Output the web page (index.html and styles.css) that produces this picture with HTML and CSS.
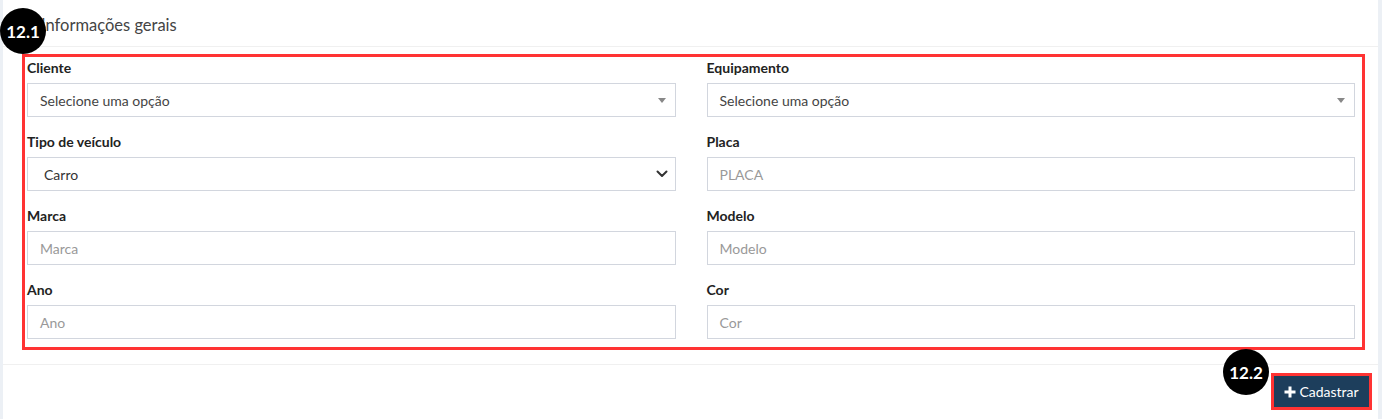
FILE: index.html
```html
<!DOCTYPE html>
<html lang="pt-BR">
<head>
<meta charset="utf-8">
<title>Informações gerais</title>
<link rel="stylesheet" href="styles.css">
</head>
<body>
<div class="card">
  <div class="card-header">
    <h3 class="card-title">Informações gerais</h3>
  </div>
  <div class="card-body">
    <div class="highlight">
      <div class="form-grid">
        <div class="group">
          <label class="lbl">Cliente</label>
          <div class="select2">
            <span class="sel-text">Selecione uma opção</span>
            <span class="tri"></span>
          </div>
        </div>
        <div class="group">
          <label class="lbl">Equipamento</label>
          <div class="select2">
            <span class="sel-text">Selecione uma opção</span>
            <span class="tri"></span>
          </div>
        </div>
        <div class="group">
          <label class="lbl">Tipo de veículo</label>
          <div class="native-select">
            <span class="native-text">Carro</span>
            <svg class="chev" width="12" height="8" viewBox="0 0 12 8"><path d="M1.5 1.5 L6 6 L10.5 1.5" fill="none" stroke="#333" stroke-width="2" stroke-linecap="round" stroke-linejoin="round"/></svg>
          </div>
        </div>
        <div class="group">
          <label class="lbl">Placa</label>
          <div class="input"><span class="ph">PLACA</span></div>
        </div>
        <div class="group">
          <label class="lbl">Marca</label>
          <div class="input"><span class="ph">Marca</span></div>
        </div>
        <div class="group">
          <label class="lbl">Modelo</label>
          <div class="input"><span class="ph">Modelo</span></div>
        </div>
        <div class="group">
          <label class="lbl">Ano</label>
          <div class="input"><span class="ph">Ano</span></div>
        </div>
        <div class="group">
          <label class="lbl">Cor</label>
          <div class="input"><span class="ph">Cor</span></div>
        </div>
      </div>
    </div>
  </div>
  <div class="card-footer">
    <div class="btn-outline">
      <button class="btn"><svg class="plus" width="12" height="12" viewBox="0 0 12 12"><path d="M6 0.5 V11.5 M0.5 6 H11.5" stroke="#fff" stroke-width="3"/></svg>Cadastrar</button>
    </div>
  </div>
  <div class="badge badge-1">12.1</div>
  <div class="badge badge-2">12.2</div>
</div>
</body>
</html>
```

FILE: styles.css
```css
html, body {
  margin: 0;
  padding: 0;
  height: 100%;
}
body {
  background: #ecf0f5;
  font-family: Lato, "Liberation Sans", sans-serif;
  color: #212529;
  overflow: hidden;
}
.card {
  position: relative;
  background: #fff;
  margin: 0 4px 0 3px;
  height: 100%;
  box-sizing: border-box;
}
.card-header {
  height: 47px;
  border-bottom: 1px solid #f0f0f0;
  box-sizing: border-box;
  padding: 15px 0 0 38px;
}
.card-title {
  margin: 0;
  font-size: 16.5px;
  font-weight: 400;
  line-height: 20px;
  color: #444;
}
.card-body {
  padding: 7px 13px 0 19px;
}
.highlight {
  border: 3px solid #ff3333;
  padding: 2px 7px 8px 2px;
}
.form-grid {
  display: grid;
  grid-template-columns: 1fr 1fr;
  column-gap: 31px;
  row-gap: 16px;
}
.lbl {
  display: block;
  font-size: 14px;
  font-weight: 700;
  line-height: 18px;
  height: 18px;
  margin-bottom: 6px;
  color: #222;
}
.select2, .native-select, .input {
  height: 34px;
  border: 1px solid #d2d6de;
  box-sizing: border-box;
  display: flex;
  align-items: center;
  font-size: 14px;
}
.select2 {
  padding: 0 9px 0 12px;
  justify-content: space-between;
  color: #444;
}
.tri {
  width: 0;
  height: 0;
  border-left: 4px solid transparent;
  border-right: 4px solid transparent;
  border-top: 5px solid #888;
}
.native-select {
  padding: 0 7px 0 16px;
  justify-content: space-between;
  color: #333;
}
.input {
  padding: 0 12px;
}
.ph {
  color: #999;
}
.card-footer {
  margin-top: 14px;
  border-top: 1px solid #f0f0f0;
  padding: 8px 6px 0 0;
  display: flex;
  justify-content: flex-end;
}
.btn-outline {
  border: 3px solid #ff3333;
}
.btn {
  display: flex;
  align-items: center;
  gap: 3px;
  height: 31px;
  width: 95px;
  justify-content: center;
  border: none;
  margin: 0;
  padding: 0;
  background: #1d3e5c;
  color: #fff;
  font-family: Lato, "Liberation Sans", sans-serif;
  font-size: 14px;
}
.badge {
  position: absolute;
  width: 46px;
  height: 46px;
  border-radius: 50%;
  background: #000;
  color: #fff;
  font-weight: 700;
  font-size: 17px;
  display: flex;
  align-items: center;
  justify-content: center;
}
.badge-1 {
  left: -3px;
  top: 8px;
}
.badge-2 {
  left: 1220px;
  top: 349px;
}
```
